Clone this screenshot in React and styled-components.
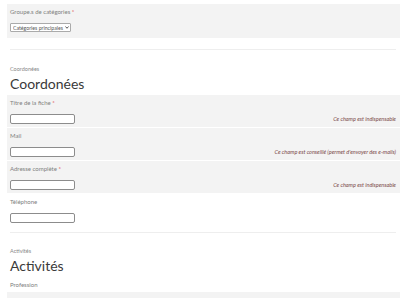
import React from "react";
import styled, { createGlobalStyle } from "styled-components";

const GlobalStyle = createGlobalStyle`
  body {
    margin: 0;
    background: #fff;
    font-family: Lato, "Liberation Sans", sans-serif;
    color: #555;
  }
`;

const Page = styled.div`
  padding: 4px 0 0 7px;
  height: 298px;
  overflow: hidden;
  box-sizing: border-box;
`;

const GroupBox = styled.div`
  background: #f3f3f3;
  height: ${(p) => p.$h || 34}px;
  padding: 4px 3px 0;
  box-sizing: border-box;
  margin-top: ${(p) => p.$top || 0}px;
`;

const Label = styled.div`
  font-size: 6px;
  color: #808080;
  line-height: 8px;
  height: 8px;
  white-space: nowrap;
  .req {
    color: #d33;
  }
`;

const SelectWrap = styled.div`
  position: relative;
  margin-top: 7px;
  width: 61px;
  height: 9px;
`;

const Select = styled.select`
  appearance: none;
  display: block;
  width: 100%;
  height: 100%;
  box-sizing: border-box;
  font-family: inherit;
  font-size: 5.2px;
  padding: 0 0 0 2px;
  border: 1px solid #aaa;
  border-radius: 1px;
  background: #fff;
  color: #555;
`;

const Chevron = styled.svg`
  position: absolute;
  right: 2px;
  top: 3px;
  width: 4px;
  height: 3px;
  pointer-events: none;
`;

const Separator = styled.hr`
  border: none;
  border-top: 1px solid #eee;
  margin: ${(p) => p.$top}px 4px 0 3px;
`;

const SectionTitle = styled.div`
  margin: ${(p) => p.$top}px 0 0 3px;
  font-size: 5.5px;
  color: #888;
  line-height: 7px;
`;

const Heading = styled.h2`
  margin: 2px 0 0 3px;
  font-weight: 400;
  font-size: 14px;
  color: #3a3a3a;
  line-height: 18px;
`;

const Field = styled.div`
  background: ${(p) => (p.$shaded ? "#f3f3f3" : "transparent")};
  margin-top: ${(p) => p.$top || 0}px;
  margin-bottom: 1px;
  padding: 4px 4px 0 3px;
  height: ${(p) => p.$h || 32}px;
  box-sizing: border-box;
`;

const InputRow = styled.div`
  display: flex;
  align-items: center;
  justify-content: space-between;
  margin-top: 7px;
`;

const TextInput = styled.input`
  display: block;
  width: 65px;
  height: 10px;
  box-sizing: border-box;
  border: 1px solid #8c8c8c;
  border-radius: 2px;
  background: #fff;
  padding: 0;
`;

const Help = styled.span`
  font-style: italic;
  font-size: 5.5px;
  color: #7b4a4a;
  line-height: 7px;
  white-space: nowrap;
`;

const fields = [
  { label: "Titre de la fiche", req: true, help: "Ce champ est indispensable", shaded: true },
  { label: "Mail", help: "Ce champ est conseillé (permet d'envoyer des e-mails)", shaded: true },
  { label: "Adresse complète", req: true, help: "Ce champ est indispensable", shaded: true },
  { label: "Téléphone", shaded: false },
];

export default function App() {
  return (
    <>
      <GlobalStyle />
      <Page>
        <GroupBox>
          <Label>
            Groupe.s de catégories <span className="req">*</span>
          </Label>
          <SelectWrap>
            <Select defaultValue="main">
              <option value="main">Catégories principales</option>
            </Select>
            <Chevron viewBox="0 0 8 6">
              <path d="M1 1 L4 4.5 L7 1" fill="none" stroke="#333" strokeWidth="1.6" />
            </Chevron>
          </SelectWrap>
        </GroupBox>
        <Separator $top={11} />
        <SectionTitle $top={16}>Coordonées</SectionTitle>
        <Heading>Coordonées</Heading>
        {fields.map((f, i) => (
          <Field key={f.label} $shaded={f.shaded} $top={i === 0 ? 2 : 0}>
            <Label>
              {f.label} {f.req && <span className="req">*</span>}
            </Label>
            <InputRow>
              <TextInput type="text" />
              {f.help && <Help>{f.help}</Help>}
            </InputRow>
          </Field>
        ))}
        <Separator $top={6} />
        <SectionTitle $top={15}>Activités</SectionTitle>
        <Heading>Activités</Heading>
        <Field $shaded={false} $h={14} $top={2}>
          <Label>Profession</Label>
        </Field>
        <GroupBox $h={10} $top={0} />
      </Page>
    </>
  );
}
